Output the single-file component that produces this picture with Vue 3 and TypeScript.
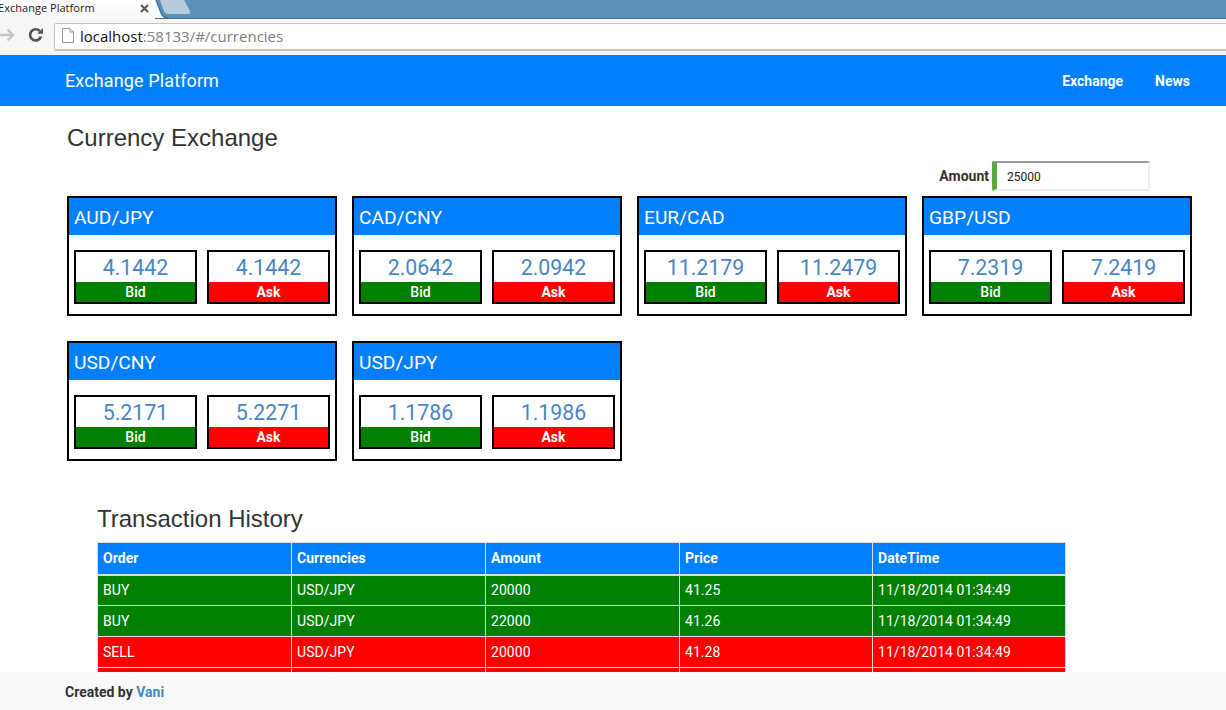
<template>
  <div class="page">
    <!-- browser chrome -->
    <div class="tabstrip">
      <div class="tab">
        <span class="tab-title">Exchange Platform</span>
        <svg class="tab-close" width="9" height="9" viewBox="0 0 9 9">
          <path d="M1 1 L8 8 M8 1 L1 8" stroke="#555" stroke-width="2" />
        </svg>
      </div>
      <svg class="tab-edge" width="50" height="19" viewBox="0 0 50 19">
        <path d="M0 0 H1 L6 13 Q8 18 13 18 H0 Z" fill="#f6f6f6" />
        <path d="M1 0 L6 13 Q8 18 13 18" fill="none" stroke="#3f6d8e" stroke-width="1.2" />
        <path d="M5 0 H29 L35 11 Q36 14 33 14 H13 Q10 14 9 11 Z" fill="#b8cbda" />
      </svg>
    </div>
    <div class="toolbar">
      <svg class="nav-icon back" width="15" height="14" viewBox="0 0 15 14">
        <path d="M0 7 H12.5 M7.5 1.5 L13 7 L7.5 12.5" fill="none" stroke="#c4c4c4" stroke-width="2.4" />
      </svg>
      <svg class="nav-icon reload" width="16" height="16" viewBox="0 0 16 16">
        <path d="M13 9.5 A5.6 5.6 0 1 1 11.8 4" fill="none" stroke="#555" stroke-width="2.6" />
        <path d="M9.2 6.8 H15 V1 Z" fill="#555" />
      </svg>
      <div class="omnibox">
        <svg class="file-icon" width="12" height="15" viewBox="0 0 12 15">
          <path d="M.5 .5 H8 L11.5 4 V14.5 H.5 Z M8 .5 V4 H11.5" fill="#fff" stroke="#9a9a9a" />
        </svg>
        <span class="host">localhost</span><span class="rest">:58133/#/currencies</span>
      </div>
    </div>

    <nav class="navbar">
      <span class="brand">Exchange Platform</span>
      <div class="nav-links">
        <a>Exchange</a>
        <a>News</a>
      </div>
    </nav>

    <main class="content">
      <h3 class="heading">Currency Exchange</h3>
      <div class="amount-row">
        <label>Amount</label>
        <input class="amount-input" :value="amount" />
      </div>

      <div class="cards">
        <section v-for="pair in pairs" :key="pair.name" class="card">
          <header class="card-head">{{ pair.name }}</header>
          <div class="quotes">
            <div class="quote">
              <div class="price">{{ pair.bid }}</div>
              <div class="tag bid">Bid</div>
            </div>
            <div class="quote">
              <div class="price">{{ pair.ask }}</div>
              <div class="tag ask">Ask</div>
            </div>
          </div>
        </section>
      </div>

      <div class="history">
        <h3 class="history-title">Transaction History</h3>
        <table>
          <colgroup>
            <col v-for="(w, i) in colWidths" :key="i" :style="{ width: w + 'px' }" />
          </colgroup>
          <thead>
            <tr>
              <th v-for="col in columns" :key="col">{{ col }}</th>
            </tr>
          </thead>
          <tbody>
            <tr v-for="(tx, i) in history" :key="i" :class="tx.order === 'BUY' ? 'buy' : 'sell'">
              <td>{{ tx.order }}</td>
              <td>{{ tx.pair }}</td>
              <td>{{ tx.amount }}</td>
              <td>{{ tx.price }}</td>
              <td>{{ tx.time }}</td>
            </tr>
            <!-- the next row only peeks out above the footer -->
            <tr class="sell">
              <td v-for="col in columns" :key="col"></td>
            </tr>
          </tbody>
        </table>
      </div>
    </main>

    <footer class="footer">Created by <a>Vani</a></footer>
  </div>
</template>

<script setup lang="ts">
interface Pair {
  name: string;
  bid: string;
  ask: string;
}

const amount = '25000';

const pairs: Pair[] = [
  { name: 'AUD/JPY', bid: '4.1442', ask: '4.1442' },
  { name: 'CAD/CNY', bid: '2.0642', ask: '2.0942' },
  { name: 'EUR/CAD', bid: '11.2179', ask: '11.2479' },
  { name: 'GBP/USD', bid: '7.2319', ask: '7.2419' },
  { name: 'USD/CNY', bid: '5.2171', ask: '5.2271' },
  { name: 'USD/JPY', bid: '1.1786', ask: '1.1986' },
];

const columns = ['Order', 'Currencies', 'Amount', 'Price', 'DateTime'];
const colWidths = [194, 194, 194, 193, 193];

const history = [
  { order: 'BUY', pair: 'USD/JPY', amount: 20000, price: '41.25', time: '11/18/2014 01:34:49' },
  { order: 'BUY', pair: 'USD/JPY', amount: 22000, price: '41.26', time: '11/18/2014 01:34:49' },
  { order: 'SELL', pair: 'USD/JPY', amount: 20000, price: '41.28', time: '11/18/2014 01:34:49' },
];
</script>

<style>
html,
body {
  margin: 0;
  overflow: hidden;
}
</style>

<style scoped>
.page {
  position: relative;
  width: 1226px;
  height: 710px;
  overflow: hidden;
  background: #fff;
  font-family: Roboto, "Liberation Sans", sans-serif;
  color: #333;
}

.tabstrip {
  display: flex;
  height: 19px;
  background: #5c92b9;
  border-bottom: 1px solid #3f6d8e;
  box-sizing: border-box;
}

.tab {
  display: flex;
  align-items: center;
  justify-content: space-between;
  flex: none;
  width: 155px;
  height: 19px;
  padding: 0 6px 5px 0;
  box-sizing: border-box;
  background: linear-gradient(#fff, #f6f6f6);
  font-family: "Open Sans", "Liberation Sans", sans-serif;
  font-size: 11px;
  color: #222;
}

.tab-title {
  margin-left: -2px;
  letter-spacing: 0.03px;
  white-space: nowrap;
}

.tab-close {
  display: block;
  margin-top: 3px;
}

.tab-edge {
  display: block;
  flex: none;
}

.toolbar {
  display: flex;
  align-items: center;
  height: 36px;
  padding-bottom: 4px;
  box-sizing: border-box;
  background: #f6f6f6;
}

.nav-icon {
  flex: none;
}

.reload {
  margin-left: 13px;
}

.omnibox {
  display: flex;
  align-items: center;
  flex: 1;
  height: 28px;
  margin: 4px -6px 0 10px;
  padding: 0 0 2px 7px;
  box-sizing: border-box;
  background: #fff;
  border: 1px solid #c4c4c4;
  border-bottom-width: 2px;
  border-radius: 2px;
  font-family: "Open Sans", "Liberation Sans", sans-serif;
  font-size: 15px;
}

.file-icon {
  margin-right: 6px;
}

.host {
  color: #111;
}

.rest {
  color: #808080;
}

.navbar {
  display: flex;
  align-items: center;
  justify-content: space-between;
  height: 51px;
  padding: 0 36px 0 65px;
  background: #007fff;
  color: #fff;
}

.brand {
  font-size: 18px;
  letter-spacing: 0.12px;
}

.nav-links {
  display: flex;
  gap: 32px;
  font-size: 14px;
  font-weight: 700;
}

.content {
  padding: 0 34px 0 67px;
}

.heading {
  margin: 0;
  padding-top: 18px;
  height: 30px;
  font-family: "Liberation Sans", Arial, sans-serif;
  font-size: 24px;
  line-height: 28px;
  font-weight: 400;
}

.amount-row {
  display: flex;
  align-items: center;
  justify-content: flex-end;
  gap: 3px;
  height: 30px;
  margin-top: 7px;
  padding-right: 42px;
  font-size: 14px;
  font-weight: 700;
}

.amount-input {
  width: 158px;
  height: 30px;
  padding: 1px 0 0 10px;
  box-sizing: border-box;
  border: 2px solid #eee;
  border-top-color: #999;
  border-left: 5px solid #5aaa3c;
  border-radius: 2px;
  outline: none;
  font-family: Roboto, "Liberation Sans", sans-serif;
  font-size: 12px;
  color: #222;
}

.cards {
  display: grid;
  grid-template-columns: repeat(4, 270px);
  gap: 25px 15px;
  margin-top: 5px;
}

.card {
  height: 120px;
  box-sizing: border-box;
  border: 2px solid #000;
}

.card-head {
  height: 37px;
  padding-left: 5px;
  background: #007fff;
  color: #fff;
  font-size: 19.2px;
  line-height: 39px;
}

.quotes {
  display: flex;
  justify-content: space-between;
  padding: 15px 5px 0;
}

.quote {
  width: 123px;
  height: 54px;
  box-sizing: border-box;
  border: 2px solid #000;
}

.price {
  height: 30px;
  text-align: center;
  color: #4a86c5;
  font-size: 21.3px;
  line-height: 32px;
}

.tag {
  height: 20px;
  text-align: center;
  color: #fff;
  font-size: 14px;
  line-height: 21px;
}

.tag.bid {
  background: #008000;
  font-weight: 500;
}

.tag.ask {
  background: #f00;
  font-weight: 700;
}

.history {
  margin: 43px 0 0 30px;
}

.history-title {
  margin: 0 0 8px;
  height: 30px;
  font-family: "Liberation Sans", Arial, sans-serif;
  font-size: 24px;
  line-height: 30px;
  font-weight: 400;
}

table {
  width: 968px;
  table-layout: fixed;
  border-collapse: collapse;
  font-size: 14px;
  color: #fff;
}

th,
td {
  height: 31px;
  padding: 0 5px;
  box-sizing: border-box;
  border: 1px solid #ddd;
  text-align: left;
  letter-spacing: 0.05px;
}

th {
  height: 32px;
  background: #007fff;
  border-bottom-width: 2px;
  font-weight: 700;
}

.buy td {
  background: #008000;
}

.sell td {
  background: #f00;
}

.footer {
  position: absolute;
  left: 0;
  right: 0;
  bottom: 0;
  height: 38px;
  padding-left: 65px;
  background: #f9f9f9;
  font-size: 14px;
  font-weight: 700;
  line-height: 40px;
}

.footer a {
  color: #428bca;
}
</style>
